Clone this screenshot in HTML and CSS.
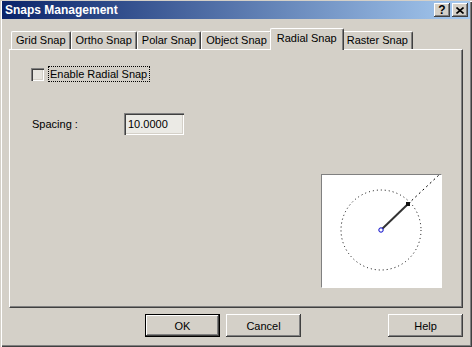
FILE: index.html
```html
<!DOCTYPE html>
<html lang="en">
<head>
  <meta charset="UTF-8">
  <title>Snaps Management</title>
  <link rel="stylesheet" href="styles.css">
</head>
<body>
  <div class="window">
    <div class="titlebar">
      <span class="title">Snaps Management</span>
      <div class="caption-buttons">
        <button class="caption-btn help-glyph">?</button>
        <button class="caption-btn">
          <svg width="8" height="7" viewBox="0 0 8 7"><path d="M0.5 0.5L7.5 6.5M7.5 0.5L0.5 6.5" stroke="#000" stroke-width="1.6" fill="none"/></svg>
        </button>
      </div>
    </div>

    <div class="dialog">
      <div class="tabs">
        <div class="tab">Grid Snap</div>
        <div class="tab">Ortho Snap</div>
        <div class="tab">Polar Snap</div>
        <div class="tab">Object Snap</div>
        <div class="tab active">Radial Snap</div>
        <div class="tab">Raster Snap</div>
      </div>

      <div class="panel">
        <div class="check-row">
          <span class="checkbox"></span>
          <span class="check-label">Enable Radial Snap</span>
        </div>

        <div class="field-row">
          <span class="field-label">Spacing :</span>
          <input class="field-input" type="text" value="10.0000">
        </div>

        <div class="preview">
          <svg width="119" height="112" viewBox="0 0 119 112">
            <circle cx="59" cy="55" r="40" fill="none" stroke="#000" stroke-width="1" stroke-dasharray="1 3"/>
            <line x1="86" y1="29" x2="118" y2="-1" stroke="#000" stroke-width="1" stroke-dasharray="2 3"/>
            <line x1="59" y1="55" x2="86" y2="29" stroke="#333" stroke-width="2"/>
            <rect x="84" y="27" width="4" height="4" fill="#111"/>
            <circle cx="59" cy="55" r="2.2" fill="#fff" stroke="#0000c8" stroke-width="1"/>
          </svg>
        </div>
      </div>

      <div class="buttons">
        <button class="btn btn-default">OK</button>
        <button class="btn">Cancel</button>
        <button class="btn btn-help">Help</button>
      </div>
    </div>
  </div>
</body>
</html>
```

FILE: styles.css
```css
body {
  margin: 0;
  font-family: "Liberation Sans", Arial, sans-serif;
  font-size: 11px;
  color: #000;
  background: #d4d0c8;
}
.window {
  width: 472px;
  height: 347px;
  box-sizing: border-box;
  padding: 1px 2px 2px 2px;
  background: #d4d0c8;
  box-shadow: inset 1px 1px #d4d0c8, inset 2px 2px #fff, inset -1px -1px #404040, inset -2px -2px #808080;
}
.titlebar {
  height: 18px;
  display: flex;
  align-items: center;
  justify-content: space-between;
  padding: 0 2px 0 3px;
  background: linear-gradient(to right, #0a246a, #a6caf0);
}
.title {
  color: #fff;
  font-weight: bold;
  font-size: 12px;
}
.caption-buttons {
  display: flex;
  gap: 2px;
}
.caption-btn {
  width: 16px;
  height: 14px;
  padding: 0;
  border: none;
  background: #d4d0c8;
  display: flex;
  align-items: center;
  justify-content: center;
  box-shadow: inset -1px -1px #404040, inset 1px 1px #fff, inset -2px -2px #808080;
}
.help-glyph {
  font-family: "Liberation Sans", Arial, sans-serif;
  font-weight: bold;
  font-size: 12px;
  line-height: 14px;
}
.dialog {
  margin: 9px 7px 0 7px;
}
.tabs {
  display: flex;
  align-items: flex-end;
  height: 21px;
  padding-left: 2px;
}
.tab {
  height: 18px;
  box-sizing: border-box;
  padding: 0 4px 1px 4px;
  display: flex;
  align-items: center;
  background: #d4d0c8;
  border-top: 1px solid #fff;
  border-left: 1px solid #fff;
  border-right: 1px solid #404040;
  border-radius: 2px 2px 0 0;
  box-shadow: inset -1px 0 #808080;
}
.tab.active {
  height: 22px;
  margin: 0 -2px -1px -2px;
  padding: 0 6px 3px 6px;
  position: relative;
  z-index: 1;
}
.panel {
  height: 259px;
  box-sizing: border-box;
  display: flex;
  flex-direction: column;
  padding: 16px 20px 19px 21px;
  border-top: 1px solid #fff;
  border-left: 1px solid #fff;
  border-right: 1px solid #404040;
  border-bottom: 1px solid #404040;
  box-shadow: inset -1px -1px #808080;
}
.check-row {
  display: flex;
  align-items: center;
  height: 16px;
}
.checkbox {
  width: 13px;
  height: 13px;
  box-sizing: border-box;
  background: #e6e4de;
  box-shadow: inset 1px 1px #808080, inset 2px 2px #404040, inset -1px -1px #fff, inset -2px -2px #d4d0c8;
}
.check-label {
  margin-left: 4px;
  height: 16px;
  box-sizing: border-box;
  padding: 0 2px 0 1px;
  line-height: 14px;
  border: 1px dotted #000;
}
.field-row {
  display: flex;
  align-items: center;
  margin-top: 31px;
}
.field-label {
  width: 92px;
  padding-left: 1px;
}
.field-input {
  width: 60px;
  height: 22px;
  box-sizing: border-box;
  border: none;
  padding: 0 4px;
  font-family: "Liberation Sans", Arial, sans-serif;
  font-size: 11px;
  background: #ebeae5;
  box-shadow: inset 1px 1px #808080, inset 2px 2px #404040, inset -1px -1px #fff, inset -2px -2px #d4d0c8;
}
.preview {
  margin-top: auto;
  align-self: flex-end;
  width: 121px;
  height: 114px;
  box-sizing: border-box;
  background: #fff;
  border-top: 1px solid #808080;
  border-left: 1px solid #808080;
  border-right: 1px solid #fff;
  border-bottom: 1px solid #fff;
}
.preview svg {
  display: block;
}
.buttons {
  display: flex;
  gap: 6px;
  margin-top: 6px;
  padding-left: 136px;
}
.btn {
  width: 75px;
  height: 23px;
  box-sizing: border-box;
  border: none;
  padding: 0;
  font-family: "Liberation Sans", Arial, sans-serif;
  font-size: 11px;
  background: #d4d0c8;
  box-shadow: inset -1px -1px #404040, inset 1px 1px #fff, inset -2px -2px #808080;
}
.btn-default {
  border: 1px solid #000;
}
.btn-help {
  margin-left: auto;
}
```
